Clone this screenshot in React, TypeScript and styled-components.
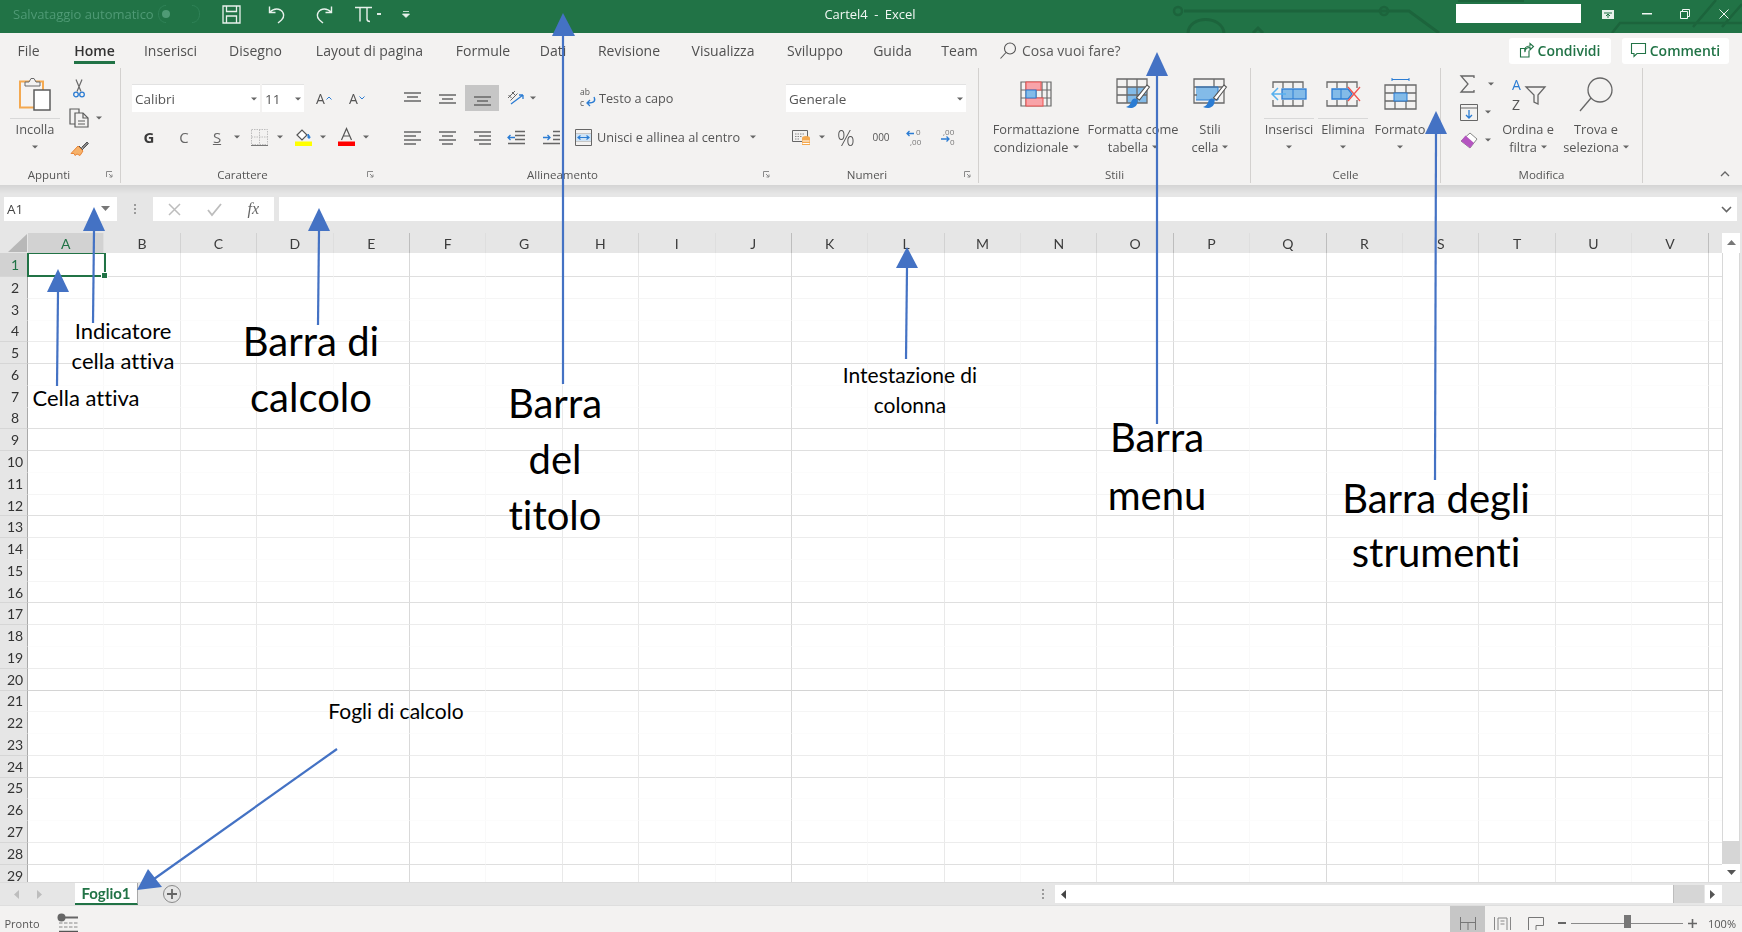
import React from "react";
import styled, { createGlobalStyle } from "styled-components";

const GREEN = "#217346";
const LINE = "#6a6a6a";
const BLUE = "#2b7cd3";
const SKY = "#83bbe8";

const GlobalStyle = createGlobalStyle`
  html, body { margin: 0; padding: 0; background: #fff; }
  body { font-family: "Open Sans", "Noto Sans", sans-serif; color: #444; }
  * { box-sizing: border-box; }
  svg { overflow: visible; }
`;

const COLUMNS = "ABCDEFGHIJKLMNOPQRSTUV".split("");
const ROWS = Array.from({ length: 29 }, (_, i) => i + 1);

// how strong each gridline looks, the screenshot was resampled so they differ
const COL_LEVEL: Record<number, number> = { 2: 1, 3: 1, 5: 2, 7: 1, 8: 1, 10: 2, 12: 1, 14: 1, 15: 2, 17: 2, 19: 1, 20: 1, 22: 2 };
const ROW_LEVEL: Record<number, number> = { 1: 3, 2: 1, 4: 2, 5: 3, 8: 3, 9: 3, 11: 1, 12: 3, 13: 2, 15: 1, 16: 3, 17: 2, 19: 2, 20: 4, 21: 1, 23: 2, 24: 3, 27: 2, 28: 3 };
const V_COLORS = ["#f9f9f9", "#e9e9e9", "#d9d9d9"];
const H_COLORS = ["#fcfcfc", "#f5f5f5", "#ececec", "#dfdfdf", "#d4d4d4"];
const HEAD_COLORS = ["#dedede", "#d2d2d2", "#bdbdbd"];

const TABS = [
  { label: "File", ml: 0, w: 21 },
  { label: "Home", ml: 35, w: 41, active: true },
  { label: "Inserisci", ml: 30, w: 51 },
  { label: "Disegno", ml: 33, w: 53 },
  { label: "Layout di pagina", ml: 33, w: 109 },
  { label: "Formule", ml: 33, w: 52 },
  { label: "Dati", ml: 31, w: 26 },
  { label: "Revisione", ml: 32, w: 62 },
  { label: "Visualizza", ml: 31, w: 64 },
  { label: "Sviluppo", ml: 32, w: 56 },
  { label: "Guida", ml: 30, w: 39 },
  { label: "Team", ml: 31, w: 33 },
];

const ARROWS = [
  { x1: 563, y1: 384, x2: 563, y2: 36, head: "563,13 552,36 575,36" },
  { x1: 1157, y1: 424, x2: 1157, y2: 76, head: "1157,52 1146,76 1168,76" },
  { x1: 1435, y1: 480, x2: 1436, y2: 134, head: "1436,111 1425,134 1447,134" },
  { x1: 906, y1: 359, x2: 907, y2: 268, head: "907,247 896,268 918,268" },
  { x1: 318, y1: 325, x2: 319, y2: 231, head: "319,208 308,231 330,231" },
  { x1: 93, y1: 323, x2: 94, y2: 231, head: "94,207 83,231 105,231" },
  { x1: 57, y1: 386, x2: 58, y2: 292, head: "58,269 47,292 69,292" },
  { x1: 337, y1: 749, x2: 154, y2: 879, head: "137,890 148,869 162,887" },
];

const Page = styled.div`
  position: relative;
  width: 1742px;
  height: 932px;
  overflow: hidden;
`;

const Excel = styled.div`
  display: flex;
  flex-direction: column;
  width: 1742px;
  height: 932px;
  background: #e6e6e6;
  filter: blur(0.5px);
`;

const Slot = styled.div<{ $w?: number; $ml?: number }>`
  flex: none;
  display: flex;
  align-items: center;
  justify-content: center;
  white-space: nowrap;
  width: ${(p) => (p.$w ? `${p.$w}px` : "auto")};
  margin-left: ${(p) => p.$ml ?? 0}px;
`;

/* title bar */
const TitleBar = styled.header`
  position: relative;
  flex: none;
  display: flex;
  align-items: center;
  height: 33px;
  padding-bottom: 5px;
  background: ${GREEN};
  color: #fff;
  overflow: hidden;
`;

const Circuit = styled.svg`
  position: absolute;
  left: 1100px;
  top: 0;
`;

const AutoSave = styled(Slot)`
  font-size: 13px;
  color: #4f9a75;
  justify-content: flex-start;
`;

const DocTitle = styled(Slot)`
  position: relative;
  font-size: 13px;
  color: #f2f7f4;
  word-spacing: 3px;
`;

const UserBox = styled(Slot)`
  position: relative;
  height: 19px;
  margin-top: -1px;
  background: #fff;
`;

const TitleIcon = styled(Slot)`
  position: relative;
`;

/* tabs */
const TabRow = styled.nav`
  flex: none;
  display: flex;
  align-items: center;
  height: 35px;
  padding: 0 13px 0 18px;
  background: #f3f2f1;
  font-size: 14px;
  color: #505050;
`;

const Tab = styled(Slot)<{ $active?: boolean }>`
  position: relative;
  align-self: stretch;
  color: ${(p) => (p.$active ? "#333" : "inherit")};
  font-weight: ${(p) => (p.$active ? 600 : 400)};

  &::after {
    content: "";
    display: ${(p) => (p.$active ? "block" : "none")};
    position: absolute;
    left: 0;
    right: 0;
    top: 28px;
    height: 3px;
    background: ${GREEN};
  }
`;

const SearchHint = styled(Slot)`
  color: #5a5a5a;
`;

const Spacer = styled.div`
  flex: 1;
`;

const ShareButton = styled.button<{ $w: number; $ml?: number }>`
  flex: none;
  display: flex;
  align-items: center;
  justify-content: center;
  gap: 4px;
  width: ${(p) => p.$w}px;
  height: 26px;
  margin-left: ${(p) => p.$ml ?? 0}px;
  padding: 0;
  border: none;
  border-radius: 3px;
  background: #fff;
  color: ${GREEN};
  font: 600 14px "Open Sans", sans-serif;
`;

/* ribbon */
const Ribbon = styled.section`
  flex: none;
  display: flex;
  height: 117px;
  padding-bottom: 2px;
  background: #f3f2f1;
`;

const Group = styled.div<{ $w: number; $line?: boolean }>`
  flex: none;
  display: flex;
  flex-direction: column;
  width: ${(p) => p.$w}px;
  border-right: 1px solid ${(p) => (p.$line ? "#d3d1cf" : "transparent")};
`;

const GroupBody = styled.div<{ $row?: boolean }>`
  flex: 1;
  display: flex;
  flex-direction: ${(p) => (p.$row ? "row" : "column")};
  padding-top: ${(p) => (p.$row ? "2px" : "16px")};
  gap: ${(p) => (p.$row ? "0" : "11px")};
`;

const GroupFooter = styled.div`
  flex: none;
  display: flex;
  align-items: center;
  height: 18px;
  font-size: 11.5px;
  color: #555;
`;

const GroupLabel = styled.div<{ $pl?: number; $pr?: number }>`
  flex: 1;
  text-align: center;
  padding-left: ${(p) => p.$pl ?? 0}px;
  padding-right: ${(p) => p.$pr ?? 0}px;
`;

const Launcher = styled.div`
  flex: none;
  display: flex;
  justify-content: center;
  width: 22px;
`;

const CollapseRow = styled.div`
  flex: none;
  display: flex;
  justify-content: flex-end;
  align-items: center;
  height: 18px;
  padding-right: 10px;
`;

const ToolRow = styled.div`
  display: flex;
  align-items: center;
  height: 28px;
`;

const Combo = styled.div<{ $w: number; $ml?: number }>`
  flex: none;
  display: flex;
  align-items: center;
  justify-content: space-between;
  width: ${(p) => p.$w}px;
  height: 28px;
  margin-left: ${(p) => p.$ml ?? 0}px;
  padding: 0 3px;
  background: #fff;
  border-top: 1px solid #e2e2e2;
  font-size: 13.5px;
  color: #555;
`;

const TextSlot = styled(Slot)<{ $small?: boolean }>`
  font-size: ${(p) => (p.$small ? 10 : 12.7)}px;
  color: #555;
`;

const FormatLetter = styled(Slot)<{ $bold?: boolean; $under?: boolean }>`
  font-size: 15px;
  font-weight: ${(p) => (p.$bold ? 700 : 400)};
  color: ${(p) => (p.$bold ? "#3a3a3a" : "#666")};
  text-decoration: ${(p) => (p.$under ? "underline" : "none")};
`;

const GrowLetter = styled(Slot)`
  gap: 1px;
  font-size: 14px;
  color: #555;
`;

const Pressed = styled(Slot)`
  height: 26px;
  background: #c6c6c6;
`;

const Percent = styled(Slot)`
  font-size: 22px;
  font-weight: 300;
  color: #555;
`;

const LargeTool = styled.div<{ $w: number; $ml?: number }>`
  flex: none;
  display: flex;
  flex-direction: column;
  align-items: center;
  width: ${(p) => p.$w}px;
  margin-left: ${(p) => p.$ml ?? 0}px;
  font-size: 12.8px;
  line-height: 18px;
  color: #555;
  text-align: center;
  white-space: nowrap;
`;

const LargeIcon = styled.div<{ $rule?: boolean }>`
  display: flex;
  align-items: center;
  justify-content: center;
  align-self: stretch;
  height: 49px;
  margin-bottom: 1px;
  border-bottom: 1px solid ${(p) => (p.$rule ? "#d8d8d8" : "transparent")};
`;

const CaretLine = styled.div`
  display: flex;
  align-items: center;
  justify-content: center;
  gap: 4px;
  height: 18px;
`;

const SmallColumn = styled.div<{ $top: number; $ml: number; $w: number }>`
  flex: none;
  display: flex;
  flex-direction: column;
  width: ${(p) => p.$w}px;
  margin-left: ${(p) => p.$ml}px;
  padding-top: ${(p) => p.$top}px;
`;

const SmallTool = styled.div<{ $h: number }>`
  display: flex;
  align-items: center;
  gap: 7px;
  height: ${(p) => p.$h}px;
`;

/* formula bar */
const FormulaBar = styled.div`
  flex: none;
  display: flex;
  height: 37px;
  padding: 12px 5px 1px 4px;
  background: linear-gradient(#d4d4d4, #e6e6e6 9px);
`;

const NameBox = styled.div`
  flex: none;
  display: flex;
  align-items: center;
  justify-content: space-between;
  width: 113px;
  padding: 0 7px 0 3px;
  background: #fff;
  font-size: 13.5px;
  color: #444;
`;

const FxBox = styled.div`
  flex: none;
  display: flex;
  align-items: center;
  justify-content: space-around;
  width: 121px;
  padding: 0 2px;
  background: #fff;
`;

const FxText = styled.span`
  font: italic 16px "Liberation Serif", serif;
  color: #666;
`;

const FormulaInput = styled.div`
  flex: 1;
  display: flex;
  align-items: center;
  justify-content: flex-end;
  margin-left: 5px;
  padding-right: 5px;
  background: #fff;
`;

/* sheet */
const Work = styled.div`
  flex: none;
  display: flex;
  height: 660px;
`;

const SheetColumn = styled.div`
  flex: none;
  display: flex;
  flex-direction: column;
  width: 1722px;
`;

const HeaderRow = styled.div`
  flex: none;
  display: flex;
  height: 31px;
  padding-top: 11px;
  overflow: hidden;
`;

const Corner = styled.div`
  flex: none;
  display: flex;
  align-items: flex-end;
  justify-content: flex-end;
  width: 28px;
  padding: 0 1px 1px 0;
`;

const ColHead = styled.div<{ $active?: boolean; $level: number }>`
  flex: none;
  width: 76.4px;
  text-align: center;
  font: 14px/21px Lato, "Open Sans", sans-serif;
  color: ${(p) => (p.$active ? GREEN : "#3c3c3c")};
  background: ${(p) => (p.$active ? "#d2d2d2" : "transparent")};
  border-right: 1px solid ${(p) => HEAD_COLORS[p.$level]};
`;

const Sheet = styled.div`
  position: relative;
  flex: none;
  display: grid;
  grid-template-columns: 28px repeat(22, 76.4px) 14px;
  grid-template-rows: 24px repeat(28, 21.78px);
  height: 629px;
  background: #fff;
  overflow: hidden;
`;

const RowHead = styled.div<{ $active?: boolean; $level: number }>`
  display: flex;
  align-items: center;
  justify-content: center;
  padding-left: 3px;
  font: 14px Lato, "Open Sans", sans-serif;
  color: ${(p) => (p.$active ? GREEN : "#333")};
  background: ${(p) => (p.$active ? "#d2d2d2" : "#e6e6e6")};
  border-right: 1.5px solid #a9a9a9;
  border-bottom: 1px solid ${(p) => (p.$level > 1 ? "#d6d6d6" : "transparent")};
`;

const Cell = styled.div<{ $h: number; $v: number }>`
  border-right: 1px solid ${(p) => V_COLORS[p.$v]};
  border-bottom: 1px solid ${(p) => H_COLORS[p.$h]};
`;

const ActiveCell = styled.div`
  position: absolute;
  left: 27px;
  top: -1px;
  width: 79px;
  height: 25px;
  border: 2px solid ${GREEN};

  &::after {
    content: "";
    position: absolute;
    right: -4px;
    bottom: -4px;
    width: 5px;
    height: 5px;
    background: ${GREEN};
    border: 1px solid #fff;
    box-sizing: content-box;
  }
`;

const VScroll = styled.div`
  flex: none;
  display: flex;
  flex-direction: column;
  width: 20px;
  padding: 11px 2px 0 0;
`;

const ScrollButton = styled.div<{ $h: number }>`
  flex: none;
  display: flex;
  align-items: center;
  justify-content: center;
  height: ${(p) => p.$h}px;
  background: #fff;
`;

const ScrollTrack = styled.div`
  flex: 1;
  background: #fff;
  border: 1px solid #d8d8d8;
  border-width: 0 1px;
`;

const ScrollThumb = styled.div`
  flex: none;
  height: 23px;
  background: #d6d6d6;
`;

/* sheet tabs */
const SheetBar = styled.div`
  flex: none;
  display: flex;
  align-items: center;
  height: 23px;
  background: #e6e6e6;
  border-top: 1px solid #dcdcdc;
`;

const SheetTab = styled(Slot)`
  height: 22px;
  background: #fff;
  border-bottom: 2px solid ${GREEN};
  border-right: 1px solid #a8a8a8;
  color: ${GREEN};
  font: 700 15px/18px Lato, sans-serif;
`;

const HTrack = styled.div`
  flex: none;
  width: 599px;
  height: 18px;
  background: #fff;
`;

const HThumb = styled.div`
  flex: none;
  width: 31px;
  height: 18px;
  background: #d6d6d6;
  border-left: 1px solid #bdbdbd;
`;

const HButton = styled(Slot)`
  height: 18px;
  background: #fff;
`;

/* status bar */
const StatusBar = styled.footer`
  flex: none;
  display: flex;
  height: 27px;
  overflow: hidden;
  background: #f3f2f1;
  border-top: 1px solid #dedede;
`;

const StatusItem = styled(Slot)<{ $on?: boolean }>`
  padding-top: 8px;
  background: ${(p) => (p.$on ? "#c6c6c6" : "transparent")};
`;

const StatusText = styled(StatusItem)`
  font-size: 11px;
  color: #555;
`;

const ZoomTrack = styled(StatusItem)`
  position: relative;
  justify-content: flex-start;

  &::before {
    content: "";
    width: 100%;
    height: 1px;
    background: #8a8a8a;
  }

  &::after {
    content: "";
    position: absolute;
    left: 53px;
    top: 9px;
    width: 7px;
    height: 13px;
    background: #777;
  }
`;

/* notes laid over the screenshot */
const Overlay = styled.svg`
  position: absolute;
  left: 0;
  top: 0;
  pointer-events: none;
`;

const Note = styled.div<{ $cx: number; $top: number; $size: number; $lh: number }>`
  position: absolute;
  left: ${(p) => p.$cx - 200}px;
  top: ${(p) => p.$top}px;
  width: 400px;
  text-align: center;
  font: ${(p) => p.$size}px/${(p) => p.$lh}px Lato, "Open Sans", sans-serif;
  font-variant-ligatures: none;
  color: #000;
`;

const Caret = ({ c = "#666" }: { c?: string }) => (
  <svg width="6" height="4" viewBox="0 0 6 4">
    <path d="M0 0.5h6L3 3.5z" fill={c} />
  </svg>
);

const LauncherIcon = () => (
  <svg width="7" height="7" viewBox="0 0 7 7" fill="none" stroke="#8a8a8a">
    <path d="M0.5 6V0.5H6M3 3l3 3M6 3.5V6H3.5" />
  </svg>
);

const SaveIcon = () => (
  <svg width="19" height="19" viewBox="0 0 19 19" fill="none" stroke="#e8f1ec" strokeWidth="1.3">
    <path d="M1 1h17v17H1z" />
    <path d="M4.5 1v5.5h10V1M4.5 18v-7h10v7" />
  </svg>
);

const UndoIcon = ({ flip }: { flip?: boolean }) => (
  <svg width="18" height="19" viewBox="0 0 18 19" fill="none" stroke="#e8f1ec" strokeWidth="1.4">
    <g transform={flip ? "matrix(-1 0 0 1 18 0)" : undefined}>
      <path d="M1.5 1.5v6h6" />
      <path d="M1.5 7.5c3-3 7-4.500 11-2.500 4 2.500 4 7.500 1 10l-3.500 3" />
    </g>
  </svg>
);

const PiIcon = () => (
  <svg width="17" height="16" viewBox="0 0 17 16" fill="none" stroke="#e8f1ec" strokeWidth="1.4">
    <path d="M0 1.500h17M5 1.500V15.500M12 1.500V13c0 1.800 1 2.500 3 2.500" />
  </svg>
);

const PasteIcon = () => (
  <svg width="32" height="34" viewBox="0 0 32 34">
    <rect x="1" y="4.500" width="23" height="26" fill="#f6f4f2" stroke="#f4a950" strokeWidth="2" />
    <path d="M6 9V5h4l2-3.500h3L17 5h4v4z" fill="#f3f2f1" stroke={LINE} />
    <rect x="15" y="13" width="16" height="20" fill="#fff" stroke="#5c5c5c" strokeWidth="1.500" />
  </svg>
);

const ScissorsIcon = () => (
  <svg width="12" height="19" viewBox="0 0 12 19" fill="none">
    <path d="M3 0.500l5 12M9 0.500l-5 12" stroke={LINE} strokeWidth="1.200" />
    <circle cx="3" cy="15.500" r="2.300" stroke={BLUE} strokeWidth="1.300" />
    <circle cx="9" cy="15.500" r="2.300" stroke={BLUE} strokeWidth="1.300" />
  </svg>
);

const CopyIcon = () => (
  <svg width="20" height="20" viewBox="0 0 20 20" fill="none" stroke="#5c5c5c" strokeWidth="1.200">
    <path d="M8 16H1V1h9v4" />
    <path d="M6 5h8l5 5v9H6z" fill="#f3f2f1" />
    <path d="M14 5v5h5M9 13h7M9 16h7" />
  </svg>
);

const PainterIcon = () => (
  <svg width="18" height="17" viewBox="0 0 18 17">
    <path d="M7 6l5 5-3 4.500-3-1.500-2 1.500-1-2-3 0z" fill="#f6b26b" stroke="#e8873a" />
    <path d="M8 6l4 4M10.500 7.500L16 2l1.500 1.500L12 9" fill="#888" stroke="#555" />
  </svg>
);

const BordersIcon = () => (
  <svg width="17" height="17" viewBox="0 0 17 17" fill="none">
    <path d="M0.500 0.500h16v15h-16zM8.500 0.500v15M0.500 8h16" stroke="#bdbdbd" strokeDasharray="1.500 1" />
    <path d="M0 16.500h17" stroke="#777" />
  </svg>
);

const FillIcon = () => (
  <svg width="17" height="18" viewBox="0 0 17 18">
    <path d="M2 7l5-5 5 5-5 5z" fill="#fff" stroke="#555" strokeWidth="1.200" />
    <path d="M13 6c1 1.500 2 2.500 2 3.500s-2 1-2 0z" fill={BLUE} stroke={BLUE} />
    <rect y="13.500" width="17" height="4.500" fill="#ffff00" />
  </svg>
);

const FontColorIcon = () => (
  <svg width="17" height="18" viewBox="0 0 17 18">
    <path d="M3.500 12L8.500 0.500 13.500 12M5.500 8h6" fill="none" stroke="#555" strokeWidth="1.200" />
    <rect y="13.500" width="17" height="4.500" fill="#ff0000" />
  </svg>
);

const AlignIcon = ({ lines }: { lines: number[][] }) => (
  <svg width="17" height="15" viewBox="0 0 17 15" fill="none" stroke="#666" strokeWidth="1.500">
    {lines.map((l, i) => (
      <path key={i} d={`M${l[0]} ${l[2]}H${l[1]}`} />
    ))}
  </svg>
);

const OrientIcon = () => (
  <svg width="19" height="18" viewBox="0 0 19 18" fill="none">
    <path d="M1 9l7-7M3.500 11.500l7-7M1.500 6l3 3M5 3l3 3" stroke="#666" />
    <path d="M4 15L16 6M16 6h-4M16 6v4" stroke={BLUE} strokeWidth="1.300" />
  </svg>
);

const IndentIcon = ({ more }: { more?: boolean }) => (
  <svg width="17" height="15" viewBox="0 0 17 15" fill="none">
    <path d={more ? "M10 1.500h7M10 5.500h7M10 9.500h7M0 13.500h17" : "M7 1.500h10M7 5.500h10M7 9.500h10M0 13.500h17"} stroke="#666" strokeWidth="1.300" />
    <path d={more ? "M0 7.500h7M4.500 5l2.500 2.500-2.500 2.500" : "M7 7.500H0M2.500 5L0 7.500 2.500 10"} stroke={BLUE} strokeWidth="1.300" />
  </svg>
);

const WrapIcon = () => (
  <svg width="16" height="20" viewBox="0 0 16 20" fill="none">
    <text x="0" y="7" fontSize="8.500" fontFamily="Open Sans" fill="#555">ab</text>
    <text x="0" y="18" fontSize="8.500" fontFamily="Open Sans" fill="#555">c</text>
    <path d="M14 9c2 4 0 6-6 6M10 12l-3 3 3 3" stroke={BLUE} strokeWidth="1.300" />
  </svg>
);

const MergeIcon = () => (
  <svg width="17" height="17" viewBox="0 0 17 17" fill="none">
    <path d="M0.500 0.500h16v16h-16z" stroke="#666" />
    <path d="M1 5h15M1 12h15" stroke="#999" />
    <rect x="1" y="5" width="15" height="7" fill="#cfe3f5" />
    <path d="M3 8.500h11M5.500 6.500L3 8.500l2.500 2M11.500 6.500l2.500 2-2.500 2" stroke={BLUE} strokeWidth="1.200" />
  </svg>
);

const CurrencyIcon = () => (
  <svg width="19" height="19" viewBox="0 0 19 19" fill="none">
    <path d="M0.500 2.500h15v11h-15z" stroke="#666" />
    <path d="M3 6h10M3 8.500h7M3 11h5" stroke="#888" strokeDasharray="1.500 1" />
    <ellipse cx="14" cy="10" rx="4" ry="2" fill="#f4a950" />
    <rect x="10" y="10" width="8" height="7" fill="#f4a950" />
    <path d="M10.500 13h7M10.500 15.500h7" stroke="#fff" />
  </svg>
);

const DecimalIcon = ({ more }: { more?: boolean }) => (
  <svg width="18" height="18" viewBox="0 0 18 18">
    <text x={more ? 3 : 10} y="7" fontSize="8" fill="#777" fontFamily="Open Sans">{more ? ",00" : "0"}</text>
    <text x={more ? 10 : 4} y="17" fontSize="8" fill="#777" fontFamily="Open Sans">{more ? "0" : ",00"}</text>
    <path d={more ? "M1 11h8M6.500 8.500L9 11l-2.500 2.500" : "M8 5.500H1M3.500 3L1 5.500 3.500 8M1 5.500"} fill="none" stroke={BLUE} strokeWidth="1.300" />
  </svg>
);

const GridBase = () => (
  <path d="M1 1h30v24H1zM1 9h30M1 17h30M11 1v24M21 1v24" fill="none" stroke="#6a6a6a" strokeWidth="1.300" />
);

const Brush = () => (
  <>
    <path d="M33.500 9L23.500 22l-3-2L31 7z" fill="#fff" stroke="#555" strokeWidth="1.100" />
    <path d="M21.500 21.500c-3-2-5-.5-6 1.500-1 3-2 5-5.500 6 5.500 2.500 12.500.5 11.500-7.500z" fill={BLUE} />
  </>
);

const CondIcon = () => (
  <svg width="32" height="26" viewBox="0 0 32 26">
    <path d="M1 1h30v24H1zM1 9h30M1 17h30M6 1v24M16 1v24M22 1v24M27 1v24" fill="none" stroke="#6a6a6a" strokeWidth="1.200" />
    <rect x="6" y="1" width="15" height="8" fill="#f8a3a8" stroke="#ef5350" />
    <rect x="6" y="17" width="17" height="8" fill="#f8a3a8" stroke="#ef5350" />
    <rect x="6" y="9" width="10" height="8" fill={SKY} stroke={BLUE} />
  </svg>
);

const TableStyleIcon = () => (
  <svg width="34" height="32" viewBox="0 0 34 32">
    <rect x="11" y="9" width="20" height="16" fill={SKY} />
    <GridBase />
    <Brush />
  </svg>
);

const CellStyleIcon = () => (
  <svg width="34" height="32" viewBox="0 0 34 32">
    <rect x="3" y="9" width="22" height="13" fill={SKY} />
    <path d="M1 1h30v24H1zM1 9h30M1 17h3M21 1v8" fill="none" stroke="#6a6a6a" strokeWidth="1.300" />
    <path d="M3 9h22v13H3" fill="none" stroke={BLUE} />
    <Brush />
  </svg>
);

const InsertIcon = () => (
  <svg width="36" height="26" viewBox="0 0 36 26" fill="none">
    <path d="M2 7V1h30v6M2 19v6h30v-6M12 1v6M22 1v6M12 19v6M22 19v6" stroke="#6a6a6a" strokeWidth="1.300" />
    <rect x="11" y="8" width="24" height="10" fill={SKY} stroke={BLUE} strokeWidth="1.300" />
    <path d="M22 8v10" stroke={BLUE} />
    <path d="M15 13H1.500M7 7l-6 6 6 6" stroke="#57b0ee" strokeWidth="1.500" fill="#f3f2f1" />
  </svg>
);

const DeleteIcon = () => (
  <svg width="35" height="26" viewBox="0 0 35 26" fill="none">
    <path d="M1 7V1h30v6M1 19v6h30v-6M11 1v6M21 1v6M11 19v6M21 19v6" stroke="#6a6a6a" strokeWidth="1.300" />
    <path d="M6 8h16l4 5-4 5H6z" fill={SKY} stroke={BLUE} strokeWidth="1.300" />
    <path d="M15 8v10" stroke={BLUE} />
    <path d="M22 6l12 14M34 6L22 20" stroke="#ef5350" strokeWidth="1.300" />
  </svg>
);

const FormatIcon = () => (
  <svg width="33" height="32" viewBox="0 0 33 32" fill="none">
    <path d="M8 1.500h17M8 0v3M25 0v3" stroke={BLUE} />
    <path d="M1 7h31v24H1zM1 15h31M1 23h31M11 7v24M22 7v24" stroke="#6a6a6a" strokeWidth="1.300" />
    <rect x="10" y="15" width="13" height="8" fill={SKY} stroke={BLUE} />
  </svg>
);

const SumIcon = () => (
  <svg width="15" height="18" viewBox="0 0 15 18" fill="none" stroke="#666" strokeWidth="1.300">
    <path d="M14 3V1H1l7 8-7 8h13v-2" />
  </svg>
);

const FillDownIcon = () => (
  <svg width="18" height="17" viewBox="0 0 18 17" fill="none">
    <path d="M0.500 0.500h17v16h-17zM0.500 4h17" stroke="#666" />
    <path d="M9 6v8M6 11l3 3 3-3" stroke={BLUE} strokeWidth="1.300" />
  </svg>
);

const EraserIcon = () => (
  <svg width="18" height="17" viewBox="0 0 18 17">
    <path d="M10 1l7 6-7 9-9-7z" fill="#fff" stroke="#888" />
    <path d="M10 16L1 9l4.500-5.500L14 11z" fill="#b455c0" />
  </svg>
);

const SortIcon = () => (
  <svg width="33" height="32" viewBox="0 0 33 32" fill="none">
    <text x="0" y="12" fontSize="14" fontFamily="Open Sans" fill={BLUE}>A</text>
    <text x="0" y="32" fontSize="14" fontFamily="Open Sans" fill="#555">Z</text>
    <path d="M14 9h19l-7 8v9l-4-2v-7z" stroke="#666" strokeWidth="1.300" />
  </svg>
);

const FindIcon = () => (
  <svg width="34" height="35" viewBox="0 0 34 35" fill="none" stroke="#666" strokeWidth="1.300">
    <circle cx="21" cy="13" r="12" />
    <path d="M12 21L1 34" />
  </svg>
);

const SearchIcon = () => (
  <svg width="16" height="17" viewBox="0 0 16 17" fill="none" stroke="#555" strokeWidth="1.100">
    <circle cx="10" cy="6.500" r="5.500" />
    <path d="M6 10.500l-5.500 6" />
  </svg>
);

const ShareIcon = () => (
  <svg width="14" height="15" viewBox="0 0 14 15" fill="none" stroke={GREEN} strokeWidth="1.100">
    <path d="M9 7.500v6.500H0.500V5.500H5" />
    <path d="M5 9c0-3 2-4.500 5-4.500V7l3.500-3.500L10 0.500v2.500C6 3 4 5 5 9z" />
  </svg>
);

const CommentIcon = () => (
  <svg width="15" height="15" viewBox="0 0 15 15" fill="none" stroke={GREEN} strokeWidth="1.100">
    <path d="M0.500 0.500h14v10H6l-3 3v-3H0.500z" />
  </svg>
);

const MacroIcon = () => (
  <svg width="21" height="20" viewBox="0 0 21 20">
    <circle cx="4.500" cy="4.500" r="4" fill="#666" />
    <path d="M8 4.500h13" stroke="#666" strokeWidth="2" />
    <path d="M2 10h19M2 14h19" stroke="#888" strokeDasharray="3.500 1.500" />
    <path d="M2 18.500h19" stroke="#555" strokeWidth="1.500" />
  </svg>
);

const NormalView = () => (
  <svg width="16" height="13" viewBox="0 0 16 13" fill="none" stroke="#777">
    <path d="M0.500 0v13M15.500 0v13M0.500 5.500h15M8 5.500V13" />
  </svg>
);

const PageView = () => (
  <svg width="17" height="13" viewBox="0 0 17 13" fill="none" stroke="#888">
    <path d="M0.500 0v13M16.500 0v13M4 1h9v12M4 1v12M6.500 4h4M6.500 7h4" />
  </svg>
);

const BreakView = () => (
  <svg width="16" height="13" viewBox="0 0 16 13" fill="none" stroke="#777">
    <path d="M0.500 0.500h15v8h-7.500V13M0.500 0.500V13" />
  </svg>
);

const Triangle = ({ dir, c = "#777" }: { dir: "up" | "down" | "left" | "right"; c?: string }) => {
  const d = { up: "M0 6h9L4.500 1z", down: "M0 1h9L4.500 6z", left: "M6 0v9L1 4.500z", right: "M1 0v9L6 4.500z" }[dir];
  return (
    <svg width="9" height="9" viewBox="0 0 9 9">
      <path d={d} fill={c} />
    </svg>
  );
};

const TitleBarRow = () => (
  <TitleBar>
    <Circuit width="642" height="33" viewBox="0 0 642 33" fill="none" stroke="#1c643c">
      <path d="M84 11H284h25l30 22" strokeWidth="3" />
      <circle cx="78" cy="11" r="4" strokeWidth="2.500" />
      <circle cx="284" cy="11" r="4" strokeWidth="2.500" />
      <path d="M88 33c1-18 34-18 36 0M153 33l5-5 5 5" strokeWidth="3" />
      <path d="M512 33l8-10h122M616 0l-23 27M642 4l-20 23" strokeWidth="2.500" />
      <path d="M358 1h66" strokeWidth="2" />
    </Circuit>
    <AutoSave $w={142} $ml={13}>Salvataggio automatico</AutoSave>
    <Slot $w={42} $ml={3}>
      <svg width="42" height="18" viewBox="0 0 42 18" fill="none">
        <path d="M34 0.500h0c5 0 7.500 4 7.500 8.500s-2.500 8.500-7.500 8.500" stroke="#2f8257" />
        <path d="M8 0.500c-5 0-7.500 4-7.500 8.500s2.500 8.500 7.500 8.500" stroke="#2f8257" />
        <circle cx="8" cy="9" r="4" fill="#4f9a75" />
      </svg>
    </Slot>
    <Slot $w={19} $ml={22}><SaveIcon /></Slot>
    <Slot $w={18} $ml={27}><UndoIcon /></Slot>
    <Slot $w={18} $ml={29}><UndoIcon flip /></Slot>
    <Slot $w={17} $ml={22}><PiIcon /></Slot>
    <Slot $w={4} $ml={5}><svg width="4" height="2"><rect width="4" height="2" fill="#dfeae4" /></svg></Slot>
    <Slot $w={8} $ml={21}>
      <svg width="8" height="7" viewBox="0 0 8 7"><path d="M1 0.500h6M0.500 3h7L4 6.500z" stroke="#e8f1ec" fill="#e8f1ec" strokeWidth="0.800" /></svg>
    </Slot>
    <DocTitle $w={92} $ml={414}>Cartel4 - Excel</DocTitle>
    <UserBox $w={125} $ml={540} />
    <TitleIcon $w={12} $ml={21}>
      <svg width="12" height="9" viewBox="0 0 12 9"><rect width="12" height="9" fill="#e8f1ec" /><path d="M2 3h8M6 8V4M4 6l2-2 2 2" stroke={GREEN} fill="none" /></svg>
    </TitleIcon>
    <TitleIcon $w={10} $ml={28}><svg width="10" height="2"><rect width="10" height="1.500" fill="#f2f7f4" /></svg></TitleIcon>
    <TitleIcon $w={10} $ml={28}>
      <svg width="10" height="10" viewBox="0 0 10 10" fill="none" stroke="#f2f7f4"><path d="M0.500 2.500h7v7h-7zM2.500 2V0.500h7v7H8" /></svg>
    </TitleIcon>
    <TitleIcon $w={10} $ml={29}>
      <svg width="10" height="10" viewBox="0 0 10 10" stroke="#f2f7f4"><path d="M0.500 0.500l9 9M9.500 0.500l-9 9" /></svg>
    </TitleIcon>
  </TitleBar>
);

const TabsRow = () => (
  <TabRow>
    {TABS.map((t) => (
      <Tab key={t.label} $w={t.w} $ml={t.ml} $active={t.active}>{t.label}</Tab>
    ))}
    <Slot $w={16} $ml={24}><SearchIcon /></Slot>
    <SearchHint $ml={6}>Cosa vuoi fare?</SearchHint>
    <Spacer />
    <ShareButton $w={102}><ShareIcon />Condividi</ShareButton>
    <ShareButton $w={107} $ml={11}><CommentIcon />Commenti</ShareButton>
  </TabRow>
);

const RibbonBar = () => (
  <Ribbon>
    <Group $w={121} $line>
      <GroupBody $row>
        <LargeTool $w={50} $ml={10}>
          <LargeIcon $rule><PasteIcon /></LargeIcon>
          <div>Incolla</div>
          <CaretLine><Caret /></CaretLine>
        </LargeTool>
        <SmallColumn $w={42} $ml={9} $top={3}>
          <SmallTool $h={30}><Slot $w={20}><ScissorsIcon /></Slot></SmallTool>
          <SmallTool $h={30}><Slot $w={20}><CopyIcon /></Slot><Caret /></SmallTool>
          <SmallTool $h={30}><Slot $w={22}><PainterIcon /></Slot></SmallTool>
        </SmallColumn>
      </GroupBody>
      <GroupFooter>
        <GroupLabel>Appunti</GroupLabel>
        <Launcher><LauncherIcon /></Launcher>
      </GroupFooter>
    </Group>

    <Group $w={261}>
      <GroupBody>
        <ToolRow>
          <Combo $w={128} $ml={11}>Calibri<Caret /></Combo>
          <Combo $w={42} $ml={2}>11<Caret /></Combo>
          <GrowLetter $w={20} $ml={10}>A<svg width="6" height="4" viewBox="0 0 6 4"><path d="M0.500 3.500L3 1l2.500 2.500" fill="none" stroke={BLUE} /></svg></GrowLetter>
          <GrowLetter $w={20} $ml={13}>A<svg width="6" height="4" viewBox="0 0 6 4"><path d="M0.500 0.500L3 3l2.500-2.500" fill="none" stroke={BLUE} /></svg></GrowLetter>
        </ToolRow>
        <ToolRow>
          <FormatLetter $w={12} $ml={22} $bold>G</FormatLetter>
          <FormatLetter $w={10} $ml={24}>C</FormatLetter>
          <FormatLetter $w={10} $ml={23} $under>S</FormatLetter>
          <Slot $w={6} $ml={12}><Caret /></Slot>
          <Slot $w={17} $ml={11}><BordersIcon /></Slot>
          <Slot $w={6} $ml={9}><Caret /></Slot>
          <Slot $w={17} $ml={12}><FillIcon /></Slot>
          <Slot $w={6} $ml={8}><Caret /></Slot>
          <Slot $w={17} $ml={12}><FontColorIcon /></Slot>
          <Slot $w={6} $ml={8}><Caret /></Slot>
        </ToolRow>
      </GroupBody>
      <GroupFooter>
        <GroupLabel $pl={5}>Carattere</GroupLabel>
        <Launcher><LauncherIcon /></Launcher>
      </GroupFooter>
    </Group>

    <Group $w={396}>
      <GroupBody>
        <ToolRow>
          <Slot $w={17} $ml={22}><AlignIcon lines={[[0, 17, 2], [3, 14, 6], [0, 17, 10]]} /></Slot>
          <Slot $w={17} $ml={18}><AlignIcon lines={[[0, 17, 4], [3, 14, 8], [0, 17, 12]]} /></Slot>
          <Pressed $w={34} $ml={9}><AlignIcon lines={[[0, 17, 6], [3, 14, 10], [0, 17, 14]]} /></Pressed>
          <Slot $w={19} $ml={8}><OrientIcon /></Slot>
          <Slot $w={6} $ml={4}><Caret /></Slot>
          <Slot $w={16} $ml={44}><WrapIcon /></Slot>
          <TextSlot $ml={3}>Testo a capo</TextSlot>
        </ToolRow>
        <ToolRow>
          <Slot $w={17} $ml={22}><AlignIcon lines={[[0, 17, 2], [0, 12, 6], [0, 17, 10], [0, 12, 14]]} /></Slot>
          <Slot $w={17} $ml={18}><AlignIcon lines={[[0, 17, 2], [3, 14, 6], [0, 17, 10], [3, 14, 14]]} /></Slot>
          <Slot $w={17} $ml={18}><AlignIcon lines={[[0, 17, 2], [5, 17, 6], [0, 17, 10], [5, 17, 14]]} /></Slot>
          <Slot $w={17} $ml={17}><IndentIcon /></Slot>
          <Slot $w={17} $ml={18}><IndentIcon more /></Slot>
          <Slot $w={17} $ml={15}><MergeIcon /></Slot>
          <TextSlot $ml={5}>Unisci e allinea al centro</TextSlot>
          <Slot $w={6} $ml={10}><Caret /></Slot>
        </ToolRow>
      </GroupBody>
      <GroupFooter>
        <GroupLabel $pr={12}>Allineamento</GroupLabel>
        <Launcher><LauncherIcon /></Launcher>
      </GroupFooter>
    </Group>

    <Group $w={201} $line>
      <GroupBody>
        <ToolRow>
          <Combo $w={180} $ml={8}>Generale<Caret /></Combo>
        </ToolRow>
        <ToolRow>
          <Slot $w={19} $ml={14}><CurrencyIcon /></Slot>
          <Slot $w={6} $ml={8}><Caret /></Slot>
          <Percent $w={18} $ml={12}>%</Percent>
          <TextSlot $w={18} $ml={17} $small>000</TextSlot>
          <Slot $w={17} $ml={16}><DecimalIcon /></Slot>
          <Slot $w={18} $ml={17}><DecimalIcon more /></Slot>
        </ToolRow>
      </GroupBody>
      <GroupFooter>
        <GroupLabel>Numeri</GroupLabel>
        <Launcher><LauncherIcon /></Launcher>
      </GroupFooter>
    </Group>

    <Group $w={272} $line>
      <GroupBody $row>
        <LargeTool $w={90} $ml={12}>
          <LargeIcon><CondIcon /></LargeIcon>
          <div>Formattazione</div>
          <CaretLine>condizionale <Caret /></CaretLine>
        </LargeTool>
        <LargeTool $w={100} $ml={2}>
          <LargeIcon><TableStyleIcon /></LargeIcon>
          <div>Formatta come</div>
          <CaretLine>tabella <Caret /></CaretLine>
        </LargeTool>
        <LargeTool $w={50} $ml={2}>
          <LargeIcon><CellStyleIcon /></LargeIcon>
          <div>Stili</div>
          <CaretLine>cella <Caret /></CaretLine>
        </LargeTool>
      </GroupBody>
      <GroupFooter><GroupLabel>Stili</GroupLabel></GroupFooter>
    </Group>

    <Group $w={190} $line>
      <GroupBody $row>
        <LargeTool $w={50} $ml={13}>
          <LargeIcon $rule><InsertIcon /></LargeIcon>
          <div>Inserisci</div>
          <CaretLine><Caret /></CaretLine>
        </LargeTool>
        <LargeTool $w={50} $ml={4}>
          <LargeIcon $rule><DeleteIcon /></LargeIcon>
          <div>Elimina</div>
          <CaretLine><Caret /></CaretLine>
        </LargeTool>
        <LargeTool $w={60} $ml={2}>
          <LargeIcon><FormatIcon /></LargeIcon>
          <div>Formato</div>
          <CaretLine><Caret /></CaretLine>
        </LargeTool>
      </GroupBody>
      <GroupFooter><GroupLabel>Celle</GroupLabel></GroupFooter>
    </Group>

    <Group $w={202} $line>
      <GroupBody $row>
        <SmallColumn $w={36} $ml={19} $top={0}>
          <SmallTool $h={28}><SumIcon /><Slot $ml={6}><Caret /></Slot></SmallTool>
          <SmallTool $h={28}><FillDownIcon /><Caret /></SmallTool>
          <SmallTool $h={28}><EraserIcon /><Caret /></SmallTool>
        </SmallColumn>
        <LargeTool $w={64} $ml={0}>
          <LargeIcon><SortIcon /></LargeIcon>
          <div>Ordina e</div>
          <CaretLine>filtra <Caret /></CaretLine>
        </LargeTool>
        <LargeTool $w={72} $ml={0}>
          <LargeIcon><FindIcon /></LargeIcon>
          <div>Trova e</div>
          <CaretLine>seleziona <Caret /></CaretLine>
        </LargeTool>
      </GroupBody>
      <GroupFooter><GroupLabel>Modifica</GroupLabel></GroupFooter>
    </Group>

    <Group $w={98}>
      <GroupBody $row />
      <CollapseRow>
        <svg width="10" height="6" viewBox="0 0 10 6" fill="none" stroke="#666" strokeWidth="1.300"><path d="M1 5l4-4 4 4" /></svg>
      </CollapseRow>
    </Group>
  </Ribbon>
);

const FormulaRow = () => (
  <FormulaBar>
    <NameBox>A1<Triangle dir="down" /></NameBox>
    <Slot $w={36}>
      <svg width="3" height="12" viewBox="0 0 3 12" fill="#9a9a9a"><rect y="1" width="2" height="2" /><rect y="5" width="2" height="2" /><rect y="9" width="2" height="2" /></svg>
    </Slot>
    <FxBox>
      <svg width="13" height="13" viewBox="0 0 13 13" stroke="#bdbdbd" strokeWidth="1.500"><path d="M1 1l11 11M12 1L1 12" /></svg>
      <svg width="15" height="13" viewBox="0 0 15 13" fill="none" stroke="#bdbdbd" strokeWidth="1.800"><path d="M1 7l4 5 9-11" /></svg>
      <FxText>fx</FxText>
    </FxBox>
    <FormulaInput>
      <svg width="11" height="7" viewBox="0 0 11 7" fill="none" stroke="#666" strokeWidth="1.600"><path d="M1 1l4.500 4.500L10 1" /></svg>
    </FormulaInput>
  </FormulaBar>
);

const SheetGrid = () => (
  <Sheet>
    {ROWS.map((r) => {
      const h = ROW_LEVEL[r] ?? 0;
      return (
        <React.Fragment key={r}>
          <RowHead $active={r === 1} $level={h}>{r}</RowHead>
          {COLUMNS.map((c, i) => (
            <Cell key={c} $h={h} $v={COL_LEVEL[i + 1] ?? 0} />
          ))}
          <Cell $h={h} $v={0} />
        </React.Fragment>
      );
    })}
    <ActiveCell />
  </Sheet>
);

const WorkArea = () => (
  <Work>
    <SheetColumn>
      <HeaderRow>
        <Corner>
          <svg width="19" height="18" viewBox="0 0 19 18"><path d="M19 0v18H0z" fill="#b8b8b8" /></svg>
        </Corner>
        {COLUMNS.map((c, i) => (
          <ColHead key={c} $active={c === "A"} $level={COL_LEVEL[i + 1] ?? 0}>{c}</ColHead>
        ))}
      </HeaderRow>
      <SheetGrid />
    </SheetColumn>
    <VScroll>
      <ScrollButton $h={20}><Triangle dir="up" /></ScrollButton>
      <ScrollTrack />
      <ScrollThumb />
      <ScrollButton $h={18}><Triangle dir="down" c="#555" /></ScrollButton>
    </VScroll>
  </Work>
);

const SheetTabs = () => (
  <SheetBar>
    <Slot $w={6} $ml={14}><Triangle dir="left" c="#bdbdbd" /></Slot>
    <Slot $w={6} $ml={17}><Triangle dir="right" c="#bdbdbd" /></Slot>
    <SheetTab $w={63} $ml={32}>Foglio1</SheetTab>
    <Slot $w={18} $ml={25}>
      <svg width="18" height="18" viewBox="0 0 18 18" fill="none"><circle cx="9" cy="9" r="8.500" stroke="#8a8a8a" /><path d="M9 4v10M4 9h10" stroke="#666" strokeWidth="1.800" /></svg>
    </Slot>
    <Spacer />
    <Slot $w={3} $ml={0}>
      <svg width="3" height="10" viewBox="0 0 3 10" fill="#9a9a9a"><rect width="2" height="2" /><rect y="4" width="2" height="2" /><rect y="8" width="2" height="2" /></svg>
    </Slot>
    <HButton $w={19} $ml={10}><Triangle dir="left" c="#444" /></HButton>
    <HTrack />
    <HThumb />
    <HButton $w={17} $ml={1}><Triangle dir="right" c="#555" /></HButton>
    <Slot $w={20} />
  </SheetBar>
);

const Status = () => (
  <StatusBar>
    <StatusText $w={36} $ml={4}>Pronto</StatusText>
    <StatusItem $ml={17}><MacroIcon /></StatusItem>
    <Spacer />
    <StatusItem $w={35} $on><NormalView /></StatusItem>
    <StatusItem $w={34}><PageView /></StatusItem>
    <StatusItem $w={34}><BreakView /></StatusItem>
    <StatusItem $w={8} $ml={5}><svg width="8" height="2"><rect width="8" height="2" fill="#666" /></svg></StatusItem>
    <ZoomTrack $w={112} $ml={5} />
    <StatusItem $w={9} $ml={5}><svg width="9" height="9" viewBox="0 0 9 9" stroke="#666" strokeWidth="1.600"><path d="M4.500 0v9M0 4.500h9" /></svg></StatusItem>
    <StatusText $w={30} $ml={10}>100%</StatusText>
    <Slot $w={5} />
  </StatusBar>
);

const Annotations = () => (
  <>
    <Overlay width="1742" height="932" viewBox="0 0 1742 932">
      {ARROWS.map((a) => (
        <g key={a.head}>
          <line x1={a.x1} y1={a.y1} x2={a.x2} y2={a.y2} stroke="#4472c4" strokeWidth="2.200" />
          <polygon points={a.head} fill="#4472c4" />
        </g>
      ))}
    </Overlay>
    <Note $cx={123} $top={316} $size={22} $lh={30}>Indicatore<br />cella attiva</Note>
    <Note $cx={86} $top={383} $size={22} $lh={30}>Cella attiva</Note>
    <Note $cx={311} $top={313} $size={40} $lh={56}>Barra di<br />calcolo</Note>
    <Note $cx={555} $top={375} $size={40} $lh={56}>Barra<br />del<br />titolo</Note>
    <Note $cx={910} $top={360} $size={21} $lh={30}>Intestazione di<br />colonna</Note>
    <Note $cx={1157} $top={408} $size={40} $lh={58}>Barra<br />menu</Note>
    <Note $cx={1436} $top={471} $size={40} $lh={54}>Barra degli<br />strumenti</Note>
    <Note $cx={396} $top={696} $size={21} $lh={30}>Fogli di calcolo</Note>
  </>
);

export default function App() {
  return (
    <>
      <GlobalStyle />
      <Page>
        <Excel>
          <TitleBarRow />
          <TabsRow />
          <RibbonBar />
          <FormulaRow />
          <WorkArea />
          <SheetTabs />
          <Status />
        </Excel>
        <Annotations />
      </Page>
    </>
  );
}
